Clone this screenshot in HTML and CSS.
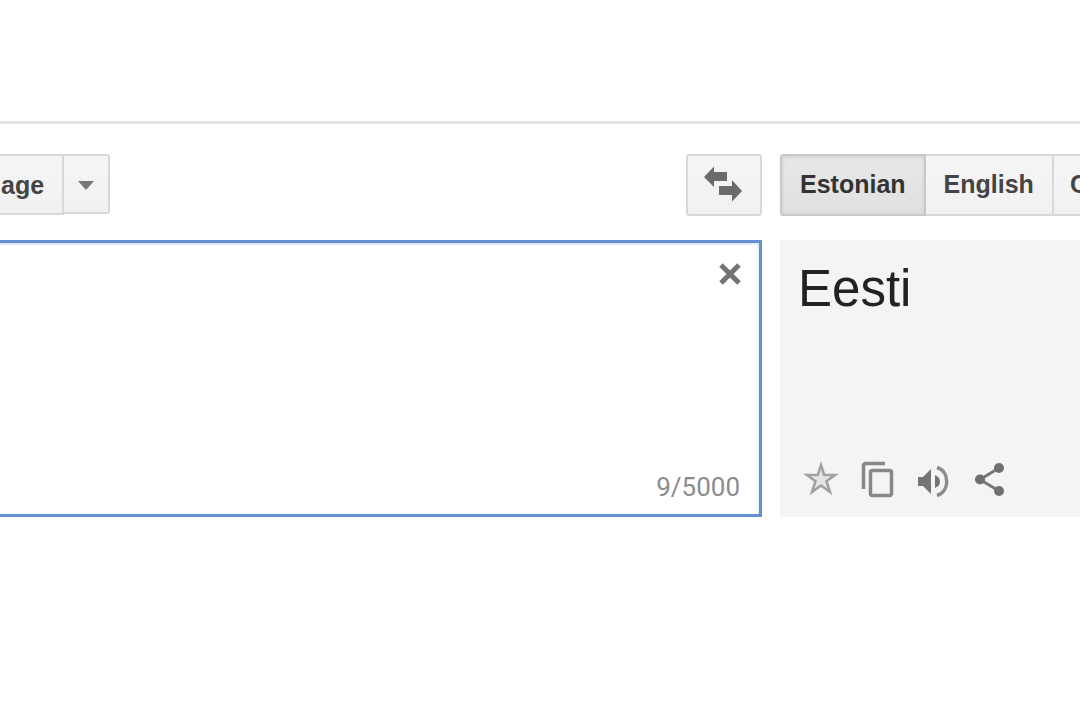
FILE: index.html
```html
<!DOCTYPE html>
<html lang="en">
<head>
<meta charset="utf-8">
<title>Translate</title>
<link rel="stylesheet" href="styles.css">
</head>
<body>
<header class="header"></header>
<main class="translator">
  <section class="source">
    <div class="toolbar">
      <div class="group">
        <button class="btn btn-cut" type="button">age</button>
        <button class="btn btn-menu" type="button" aria-label="More languages">
          <svg width="16" height="9" viewBox="0 0 16 9"><path d="M0 0h16L8 9z" fill="#777"/></svg>
        </button>
      </div>
      <button class="btn btn-swap" type="button" aria-label="Swap languages">
        <svg width="40" height="36" viewBox="0 0 40 36"><path d="M1 11L11 .5V6h13v9H11v6zM16 20h13v-6l10 11-10 10.500V29H16z" fill="#6b6b6b"/></svg>
      </button>
    </div>
    <div class="editor">
      <textarea class="input" aria-label="Source text"></textarea>
      <button class="icon clear" type="button" aria-label="Clear text">
        <svg width="24" height="24" viewBox="0 0 24 24"><path d="M3 3l18 18M21 3L3 21" stroke="#737373" stroke-width="5" fill="none"/></svg>
      </button>
      <span class="count">9/5000</span>
    </div>
  </section>
  <section class="target">
    <div class="toolbar group">
      <button class="btn btn-active" type="button">Estonian</button>
      <button class="btn" type="button">English</button>
      <button class="btn btn-next" type="button">C</button>
    </div>
    <div class="result">
      <p class="translation">Eesti</p>
      <div class="actions">
        <button class="icon" type="button" aria-label="Save">
          <svg width="36" height="40" viewBox="0 0 36 40"><path d="M18 5l3.200 10H32l-8.500 6.200L27 32l-9-6.500L9 32l3.500-10.800L4 15h10.800z" fill="#e4e4e4" stroke="#a0a0a0" stroke-width="2.500"/></svg>
        </button>
        <button class="icon" type="button" aria-label="Copy">
          <svg width="36" height="40" viewBox="0 0 36 40"><g fill="none" stroke="#888" stroke-width="3.500"><path d="M4.500 29V6q0-2.500 2.500-2.500h19"/><rect x="11.500" y="10.500" width="21" height="25" rx="2"/></g></svg>
        </button>
        <button class="icon" type="button" aria-label="Listen">
          <svg width="36" height="40" viewBox="0 0 36 40"><path d="M3 17h5l8-8v25l-8-8H3zM20 15q5 2 5 6.500t-5 6.500z" fill="#757575"/><path d="M22 7.500c13 4 13 24 0 28" fill="none" stroke="#8c8c8c" stroke-width="3.500"/></svg>
        </button>
        <button class="icon" type="button" aria-label="Share">
          <svg width="36" height="40" viewBox="0 0 36 40"><path d="M28 8L9 19.500 28 31" fill="none" stroke="#777" stroke-width="3"/><g fill="#707070"><circle cx="28" cy="8" r="5"/><circle cx="9" cy="19.500" r="5"/><circle cx="28" cy="31" r="5"/></g></svg>
        </button>
      </div>
    </div>
  </section>
</main>
</body>
</html>
```
FILE: styles.css
```css
* {
  box-sizing: border-box;
}

body {
  margin: 0;
  background: #fff;
  font-family: "Liberation Sans", Arial, sans-serif;
  overflow-x: hidden;
}

.header {
  height: 124px;
  border-bottom: 3px solid #e3e3e3;
}

.translator {
  display: flex;
  gap: 18px;
  padding-top: 30px;
}

.source {
  flex: 1;
  min-width: 0;
}

.target {
  flex: 0 0 300px;
  min-width: 0;
}

.toolbar {
  display: flex;
  align-items: flex-start;
  justify-content: space-between;
  height: 86px;
}

.group {
  display: flex;
  justify-content: flex-start;
}

.btn {
  display: flex;
  flex: none;
  align-items: center;
  justify-content: center;
  height: 62px;
  margin: 0;
  padding: 0 18px 2px;
  border: 2px solid #d8d8d8;
  background: linear-gradient(#f5f5f5, #f1f1f1);
  color: #444;
  font: bold 25px/30px "Liberation Sans", Arial, sans-serif;
}

.group .btn + .btn {
  margin-left: -2px;
}

.btn:last-child {
  border-radius: 0 3px 3px 0;
}

.btn-cut {
  height: 61px;
  padding: 0 18px 0 1px;
  border-left: 0;
}

.btn-menu {
  width: 48px;
  height: 60px;
  padding: 2px 0 0;
}

.btn.btn-swap {
  width: 76px;
  padding: 0 3px 2px 0;
  border-radius: 3px;
}

.btn-next {
  padding: 0 16px 2px;
}

.btn-active {
  z-index: 1;
  border-color: #c8c8c8;
  border-radius: 3px 0 0 3px;
  background: linear-gradient(#e8e8e8, #e0e0e0);
  box-shadow: inset 0 1px 4px #ccc;
  color: #333;
}

.editor {
  position: relative;
}

.input {
  display: block;
  width: 100%;
  height: 277px;
  padding: 20px 60px 20px 20px;
  border: 3px solid #6391d3;
  border-left: 0;
  border-radius: 0;
  outline: 0;
  background: #fff;
  box-shadow: inset -1px 2px 2px #dce7f7;
  font: 51px/58px "Liberation Sans", Arial, sans-serif;
  resize: none;
}

.icon {
  display: block;
  padding: 0;
  border: 0;
  background: none;
}

.icon svg {
  display: block;
}

.clear {
  position: absolute;
  top: 22px;
  right: 20px;
}

.count {
  position: absolute;
  right: 22px;
  bottom: 15px;
  color: #8c8c8c;
  font: 26px/30px Roboto, sans-serif;
}

.result {
  display: flex;
  flex-direction: column;
  justify-content: space-between;
  height: 277px;
  padding: 20px 18px 17px;
  background: #f4f4f4;
}

.translation {
  margin: 0;
  color: #222;
  font-size: 51px;
  line-height: 58px;
}

.actions {
  display: flex;
  gap: 20px;
  padding-left: 5px;
}
```
